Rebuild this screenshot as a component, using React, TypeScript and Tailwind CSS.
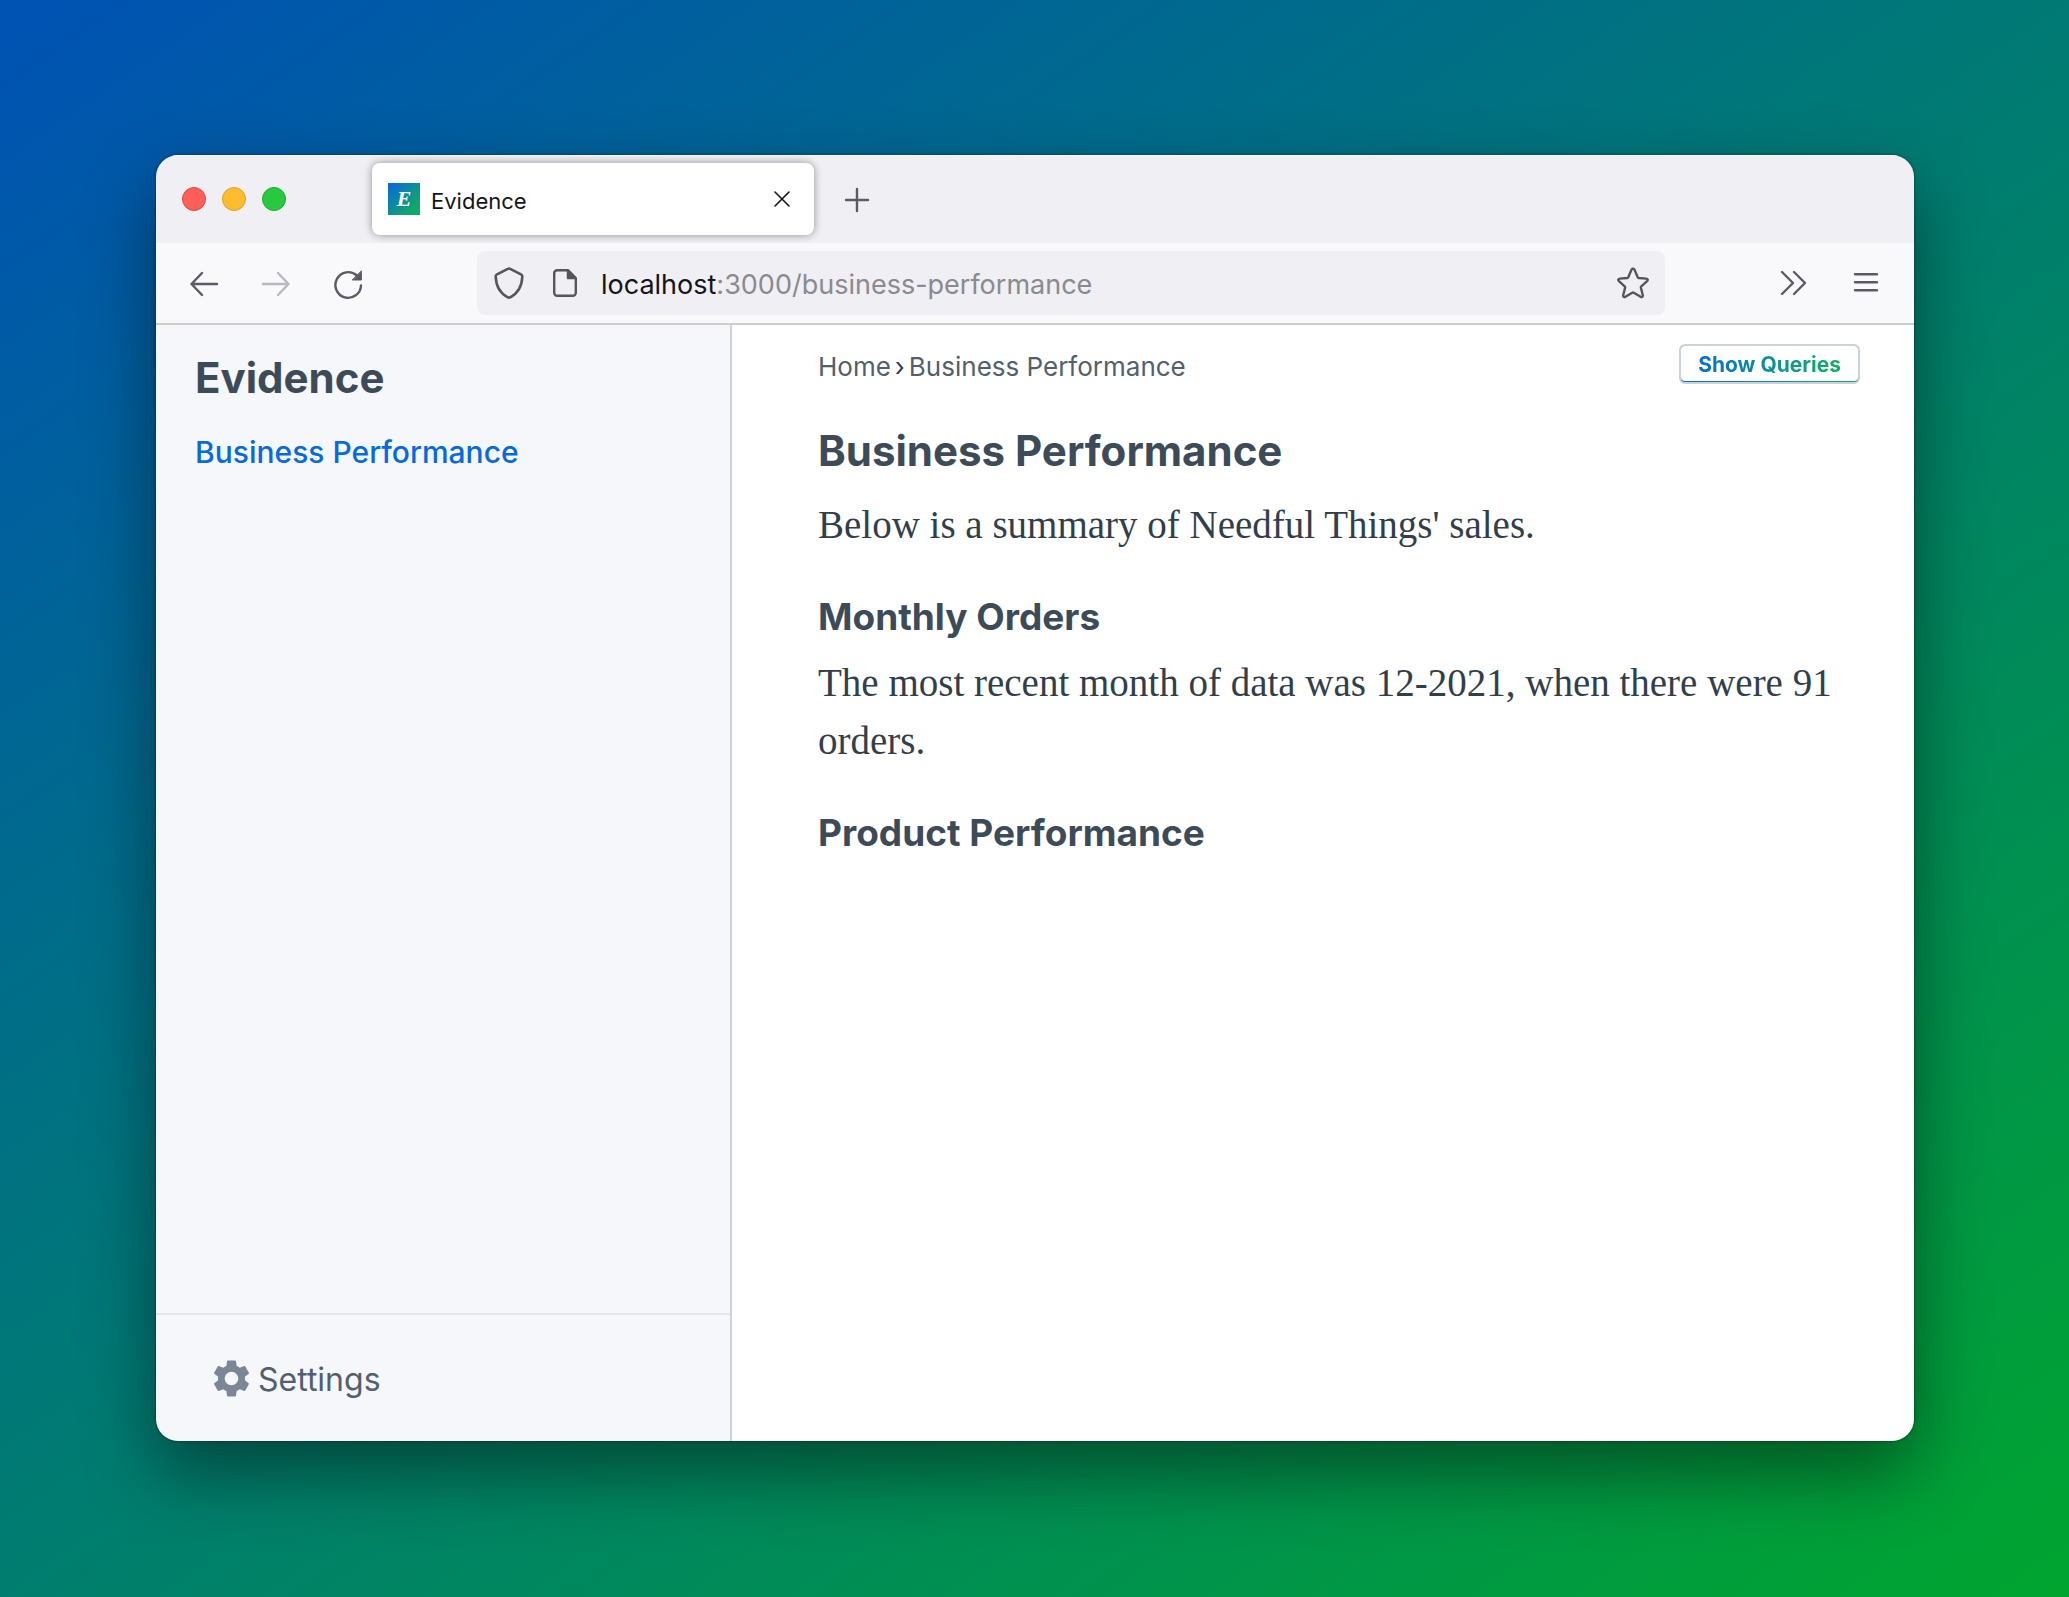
import { MdSettings } from "react-icons/md";

const stroke = {
  fill: "none",
  stroke: "currentColor",
  strokeWidth: 2.4,
  strokeLinecap: "round" as const,
  strokeLinejoin: "round" as const,
};

function Favicon() {
  return (
    <span className="flex size-8 items-center justify-center bg-linear-135/srgb from-[#0a66e0] to-[#10a868] to-80% font-['Liberation_Serif',serif] text-[22px] leading-none font-bold text-white italic">
      E
    </span>
  );
}

function TabStrip() {
  return (
    <div className="flex h-[88px] items-center bg-[#f0eff4] pl-[26px] shadow-[inset_0_1px_0_#fafafc]">
      <div className="flex w-[190px] shrink-0 gap-4">
        <button aria-label="Close window" className="size-6 rounded-full border border-[#e2463f] bg-[#ff5f57]" />
        <button aria-label="Minimize window" className="size-6 rounded-full border border-[#e0a023] bg-[#febc2e]" />
        <button aria-label="Zoom window" className="size-6 rounded-full border border-[#1dad2b] bg-[#28c840]" />
      </div>
      <div className="flex h-18 w-[442px] items-center rounded-lg bg-white pr-[23px] pl-4 shadow-[0_0_8px_rgba(0,0,0,0.4)]">
        <Favicon />
        <span className="ml-[11px] flex-1 pt-1 text-[22px] text-[#15141a]">Evidence</span>
        <button aria-label="Close tab" className="text-[#15141a]">
          <svg viewBox="0 0 18 18" className="size-[18px]" {...stroke} strokeWidth={1.6}>
            <path d="M2 2l14 14M16 2L2 16" />
          </svg>
        </button>
      </div>
      <button aria-label="New tab" className="ml-[29px] pt-0.5 text-[#5b5b66]">
        <svg viewBox="0 0 28 28" className="size-7" {...stroke}>
          <path d="M14 3v22M3 14h22" />
        </svg>
      </button>
    </div>
  );
}

function Toolbar() {
  return (
    <div className="flex h-[82px] items-center border-b-2 border-[#cccccc] bg-[#f9f9fb] pr-8 pl-8 text-[#5b5b66]">
      <div className="flex w-[289px] shrink-0 gap-10 pt-0.5">
        <button aria-label="Back">
          <svg viewBox="0 0 32 32" className="size-8" {...stroke}>
            <path d="M29 16H3.500M14 5L3.500 16L14 27" />
          </svg>
        </button>
        <button aria-label="Forward" className="text-[#b9b9be]">
          <svg viewBox="0 0 32 32" className="size-8" {...stroke}>
            <path d="M3 16H28.500M18 5L28.500 16L18 27" />
          </svg>
        </button>
        <button aria-label="Reload">
          <svg viewBox="0 0 32 32" className="size-8" {...stroke}>
            <path d="M29 17.500A12.800 12.800 0 1 1 24.800 7.500" />
            <path d="M29.400 3.200V12H20.600Z" fill="currentColor" strokeWidth={1} />
          </svg>
        </button>
      </div>
      <div className="flex h-16 min-w-0 flex-1 items-center rounded-lg bg-[#f0eff4] pr-4 pl-4">
        <svg viewBox="0 0 32 32" className="size-8 shrink-0 text-[#55555a]" {...stroke} strokeWidth={2.6}>
          <path d="M14.800 1.900Q16 1.200 17.200 1.900L28 7.300Q29.400 8 29.300 9.500C29 19 24.500 26.500 17.200 30.300Q16 30.900 14.800 30.300C7.500 26.500 3 19 2.700 9.500Q2.600 8 4 7.300Z" />
        </svg>
        <svg viewBox="0 0 32 32" className="ml-6 size-8 shrink-0 text-[#55555a]" {...stroke} strokeWidth={2.4}>
          <path d="M8 3.200H19L26.800 11V25.800A3 3 0 0 1 23.800 28.800H8.200A3 3 0 0 1 5.200 25.800V6.200A3 3 0 0 1 8.200 3.200Z" />
          <path d="M18.500 3.200V11.500H26.800Z" fill="currentColor" strokeWidth={1.5} />
        </svg>
        <p className="ml-5 min-w-0 flex-1 truncate pt-1 text-[27px] leading-10 text-[#8a8a8f]">
          <span className="text-[#15141a]">localhost</span>:3000/business-performance
        </p>
        <button aria-label="Bookmark this page" className="text-[#55555a]">
          <svg viewBox="0 0 32 32" className="size-8" {...stroke} strokeWidth={2.4}>
            <path d="M14.500 2.600Q16 0.600 17.500 2.600L20.700 10.200Q21 10.900 21.800 11L29.300 11.600Q31.800 12.200 30.100 14.200L24.300 19.300Q23.700 19.900 23.900 20.700L25.800 28.200Q26 30.800 23.600 29.800L16.800 25.700Q16 25.200 15.200 25.700L8.400 29.800Q6 30.800 6.200 28.200L8.100 20.700Q8.300 19.900 7.700 19.300L1.900 14.200Q0.200 12.200 2.700 11.600L10.200 11Q11 10.900 11.300 10.200Z" />
          </svg>
        </button>
      </div>
      <div className="ml-28 flex shrink-0 gap-[41px]">
        <button aria-label="More tools">
          <svg viewBox="0 0 32 32" className="size-8" {...stroke}>
            <path d="M5 5L16 16L5 27M17 5L28 16L17 27" />
          </svg>
        </button>
        <button aria-label="Open application menu">
          <svg viewBox="0 0 32 32" className="size-8" {...stroke}>
            <path d="M5 7.200H27M5 15.200H27M5 23.200H27" />
          </svg>
        </button>
      </div>
    </div>
  );
}

function Sidebar() {
  return (
    <aside className="flex w-[576px] shrink-0 flex-col border-r-2 border-[#cbd2da] bg-[#f6f7fb]">
      <nav className="flex-1 px-[39px] pt-[23px]">
        <h2 className="text-[42px] leading-[60px] font-bold text-[#3d4b59]">Evidence</h2>
        <a href="#business-performance" className="mt-6 block text-[30px] leading-10 font-medium text-[#056ae0]">
          Business Performance
        </a>
      </nav>
      <div className="border-t-2 border-[#e4e6ea] px-[53px] py-10">
        <a href="#settings" className="flex items-center gap-1 text-[32px] leading-[42px] text-[#52606d]">
          <MdSettings className="size-[45px] text-[#7b8794]" />
          <span className="pt-1">Settings</span>
        </a>
      </div>
    </aside>
  );
}

function Report() {
  return (
    <main className="min-w-0 flex-1 bg-white pr-[54px] pl-[86px]">
      <div className="flex h-20 items-center justify-between pb-0.5">
        <nav aria-label="Breadcrumb" className="flex gap-1 pt-1 text-[26px] text-[#52606d]">
          <a href="#home">Home</a>
          <span className="text-[#323f4b]">›</span>
          <a href="#business-performance">Business Performance</a>
        </nav>
        <button className="h-10 rounded-md border-2 border-[#cbd2d9] bg-linear-to-r/srgb from-[#0a6fd0] to-[#10b060] bg-origin-border pb-px text-[21px] font-bold">
          <span className="flex h-full items-center rounded-sm bg-white px-[17px] pt-0.5">
            <span className="bg-linear-to-r/srgb from-[#0a6fd0] to-[#10b060] bg-clip-text text-transparent">
              Show Queries
            </span>
          </span>
        </button>
      </div>
      <h1 className="mt-4 text-[42px] leading-[60px] font-bold text-[#3d4b59]">Business Performance</h1>
      <p className="mt-[15px] font-['Liberation_Serif',serif] text-[39px] leading-[58px] text-[#323f4b]">
        Below is a summary of Needful Things' sales.
      </p>
      <h2 className="mt-[35px] text-[37px] leading-[56px] font-bold text-[#3d4b59]">Monthly Orders</h2>
      <p className="mt-[9px] font-['Liberation_Serif',serif] text-[39px] leading-[58px] text-[#323f4b]">
        The most recent month of data was 12-2021, when there were 91 orders.
      </p>
      <h2 className="mt-[35px] text-[37px] leading-[56px] font-bold text-[#3d4b59]">Product Performance</h2>
    </main>
  );
}

export default function App() {
  return (
    <div className="flex min-h-screen bg-linear-145/srgb from-[#0052b4] to-[#00a52f] pt-[155px] pr-[155px] pb-[156px] pl-[156px] font-[Inter,sans-serif]">
      <div className="flex min-w-0 flex-1 flex-col overflow-hidden rounded-[22px] shadow-[0_32px_72px_rgba(0,0,0,0.45),0_0_3px_rgba(0,0,0,0.5)]">
        <TabStrip />
        <Toolbar />
        <div className="flex flex-1">
          <Sidebar />
          <Report />
        </div>
      </div>
    </div>
  );
}
